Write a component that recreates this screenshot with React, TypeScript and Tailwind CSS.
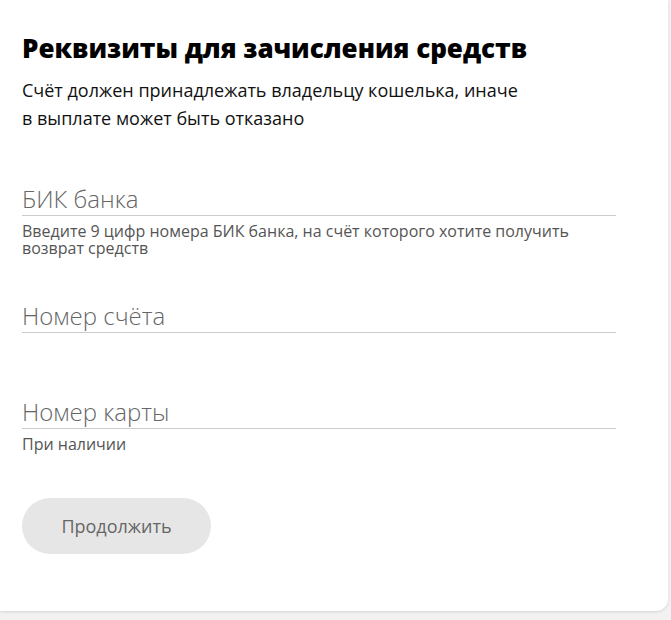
const font = { fontFamily: '"Open Sans", "Noto Sans", sans-serif' };

function Field({ label, hint }: { label: string; hint?: string }) {
  return (
    <div>
      <div className="flex h-[44px] items-end border-b border-[#cccccc] pb-[1px]">
        <span className="text-[24px] font-light leading-[30px] text-[#666666]">{label}</span>
      </div>
      {hint && <p className="mt-[7px] text-[16px] leading-[17px] text-[#555555]">{hint}</p>}
    </div>
  );
}

export default function App() {
  return (
    <div className="min-h-[620px] bg-[#f2f2f2]" style={font}>
      <div className="h-[611px] w-[668px] rounded-br-xl bg-white pl-[22px] pt-[32px] shadow-[0_1px_3px_rgba(0,0,0,0.12)]">
        <div className="w-[594px]">
          <h1 className="text-[26px] font-extrabold leading-[32px] text-black">
            Реквизиты для зачисления средств
          </h1>
          <p className="mt-[12px] text-[18px] leading-[28px] text-[#111111]">
            Счёт должен принадлежать владельцу кошелька, иначе
            <br />
            в выплате может быть отказано
          </p>
          <div className="mt-[40px]">
            <Field
              label="БИК банка"
              hint="Введите 9 цифр номера БИК банка, на счёт которого хотите получить возврат средств"
            />
          </div>
          <div className="mt-[32px]">
            <Field label="Номер счёта" />
          </div>
          <div className="mt-[52px]">
            <Field label="Номер карты" hint="При наличии" />
          </div>
          <button className="mt-[45px] h-[56px] w-[189px] rounded-full bg-[#e6e6e6] text-[18px] text-[#666666]">
            Продолжить
          </button>
        </div>
      </div>
    </div>
  );
}
